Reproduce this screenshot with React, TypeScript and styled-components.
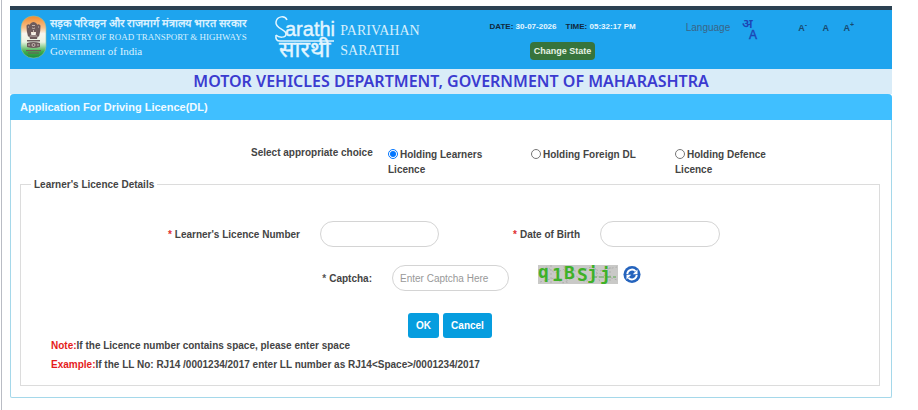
import React, { useState } from "react";
import styled, { createGlobalStyle } from "styled-components";

const GlobalStyle = createGlobalStyle`
  *, *::before, *::after { box-sizing: border-box; }
  body {
    margin: 0;
    background: #fff;
    color: #444;
    font: 700 10px/15px "Liberation Sans", Arial, sans-serif;
  }
  button, input { font: inherit; }
`;

const Page = styled.div`
  min-height: 100vh;
  margin-left: 1px;
  padding: 6px 26px 12px 8px;
  border-left: 1px solid #b9bcc4;
`;

const Header = styled.header`
  display: grid;
  grid-template-columns: 265fr 184fr 206fr 226fr;
  min-height: 63px;
  border-top: 4px solid #2b4152;
  background: #1ea4ee;
`;

const Ministry = styled.div`
  display: flex;
  align-items: flex-start;
  gap: 3px;
  padding: 5px 0 0 10px;
`;

const MinistryText = styled.div`
  padding-top: 1px;
  color: #d9f1ff;
  font: 400 11px/14px "Liberation Serif", "Times New Roman", serif;
  white-space: nowrap;
`;

const Hindi = styled.div`
  font-weight: 600;
`;

const MinistryName = styled.div`
  font-size: 9px;
`;

const Government = styled.div`
  font-size: 11px;
`;

const Brand = styled.div`
  display: flex;
  gap: 4px;
  align-items: flex-start;
  padding-top: 4px;
`;

const BrandName = styled.div`
  padding-top: 7px;
  color: #d5effd;
  font: 400 14px/20px "Liberation Serif", "Times New Roman", serif;
`;

const Clock = styled.div`
  display: flex;
  flex-direction: column;
  align-items: center;
  gap: 8px;
  padding-top: 10px;
`;

const ClockLine = styled.div`
  display: flex;
  gap: 9px;
  color: #e6f6ff;
  font-size: 8px;
  line-height: 14px;
  white-space: nowrap;
`;

const ClockKey = styled.span`
  color: #10293e;
`;

const StateButton = styled.button`
  height: 18px;
  padding: 0 4px;
  border: 0;
  border-radius: 4px;
  background: #37743c;
  color: #e6f2e4;
  font-size: 9px;
  line-height: 18px;
`;

const Tools = styled.div`
  display: flex;
  align-items: flex-start;
  padding: 5px 0 0 20px;
`;

const LanguageLabel = styled.span`
  padding: 5px 12px 0 0;
  color: #3a6586;
  font-weight: 400;
`;

const IconButton = styled.button`
  display: block;
  padding: 0;
  border: 0;
  background: none;
  line-height: 0;
`;

const TextSizes = styled.div`
  display: flex;
  gap: 12px;
  padding: 6px 0 0 35px;
`;

const SizeButton = styled.button`
  width: 11px;
  padding: 0;
  border: 0;
  background: none;
  color: #184a70;
  font-size: 9px;
  line-height: 14px;
  white-space: nowrap;

  sup {
    font-size: 7px;
    line-height: 0;
  }
`;

const Department = styled.h1`
  margin: 0;
  background: #d9ecf8;
  color: #3b3bd0;
  font: 600 16px/25px "Noto Sans", "Open Sans", sans-serif;
  text-align: center;
`;

const Panel = styled.main`
  border: 1px solid #a5d8ea;
  border-top: 0;
  border-radius: 4px 4px 2px 2px;
`;

const PanelTitle = styled.h2`
  margin: 0 -1px;
  padding: 0 10px;
  border-radius: 4px 4px 0 0;
  background: #40bfff;
  color: #f1faff;
  font-size: 11px;
  line-height: 26px;
`;

const PanelBody = styled.form`
  padding: 25px 11px 11px 9px;
`;

const Choices = styled.div`
  display: grid;
  grid-template-columns: 231fr 137fr 143fr 144fr 130fr 75fr;
`;

const ChoiceTitle = styled.span`
  grid-column: 2;
  white-space: nowrap;
`;

const Choice = styled.label`
  padding: 2px 32px 0 0;
`;

const Radio = styled.input`
  width: 10px;
  height: 10px;
  margin: 0 2px 0 0;
  vertical-align: -1px;
`;

const Details = styled.fieldset`
  min-width: 0;
  margin: 0;
  padding: 29px 0 9px;
  border: 1px solid #dcdcdc;
`;

const Legend = styled.legend`
  margin-left: 10px;
  padding: 0 3px;
`;

const Row = styled.div<{ $columns: string; $gap: number }>`
  display: grid;
  grid-template-columns: ${(p) => p.$columns};
  align-items: center;
  margin-bottom: ${(p) => p.$gap}px;
`;

const FieldLabel = styled.label`
  padding-right: 20px;
  text-align: right;
  white-space: nowrap;
`;

const Star = styled.span<{ $muted?: boolean }>`
  margin-right: 3px;
  color: ${(p) => (p.$muted ? "#555" : "#e03030")};
`;

const TextBox = styled.input`
  width: 100%;
  height: 26px;
  padding: 0 7px;
  border: 1px solid #d4d4d4;
  border-radius: 13px;
  background: #fff;
  color: #444;
  font-weight: 400;

  &::placeholder { color: #999; }
`;

const Captcha = styled.div`
  display: flex;
  align-items: center;
  gap: 5px;
  margin-top: -8px;
  padding-left: 29px;
`;

const Actions = styled.div`
  display: flex;
  justify-content: center;
  gap: 4px;
`;

const ActionButton = styled.button`
  height: 25px;
  padding: 0 8px;
  border: 0;
  border-radius: 3px;
  background: #069ddf;
  color: #fff;
`;

const Note = styled.p`
  margin: 0 0 4px 30px;
`;

const NoteKey = styled.span`
  color: #e51c1c;
`;

function Emblem() {
  return (
    <svg width="27" height="44" viewBox="0 0 27 44" role="img" aria-label="National emblem">
      <defs>
        <linearGradient id="tricolour" x1="0" y1="0" x2="0" y2="1">
          <stop offset="0" stopColor="#f2892b" />
          <stop offset="0.28" stopColor="#f6c08b" />
          <stop offset="0.42" stopColor="#f7f5ee" />
          <stop offset="0.62" stopColor="#e9f3e2" />
          <stop offset="0.85" stopColor="#3fae4c" />
          <stop offset="1" stopColor="#1c8a3c" />
        </linearGradient>
      </defs>
      <rect x="1" y="1" width="25" height="42" rx="12" fill="url(#tricolour)" stroke="#8fc3a2" strokeWidth="0.6" />
      <g fill="#6d5b5c">
        <path d="M10 9q3.500-4 7 0l.5 3-1 5h-6l-1-5z" />
        <path d="M6.500 10.500q2-2 3.500-.5l.500 3.500 1 8H8L6.800 16z" />
        <path d="M20.500 10.500q-2-2-3.500-.5l-.5 3.500-1 8H19l1.200-5.500z" />
        <path d="M9 20h9l-1 4h-7z" />
        <path d="M7 25h13v1.500H7z" />
        <path d="M7 28q6.500-2 13 0v4q-6.500 2-13 0z" />
        <path d="M6 35h15v1.200H6zM8 37.500h11v1H8z" />
      </g>
      <g fill="none" stroke="#e6ddd3" strokeWidth="0.7">
        <circle cx="13.500" cy="30" r="1.500" />
        <path d="M9 29v2M18 29v2M12 10.500h3M12 13q1.500 1 3 0M8 12h1M18 12h1M10 21h7M13.500 15v4" />
      </g>
    </svg>
  );
}

function SarathiLogo() {
  return (
    <svg width="61" height="48" viewBox="0 0 61 48" overflow="visible" role="img" aria-label="Sarathi">
      <g fill="#e2f5ff" stroke="#e2f5ff" strokeWidth="0.4" fontWeight="400">
        <text x="10" y="22" fontSize="20" fontFamily="Liberation Sans, sans-serif">arathi</text>
        <text x="4" y="43" fontSize="23" fontFamily="Noto Sans, Noto Sans Devanagari, sans-serif">सारथी</text>
      </g>
      <path
        d="M12 6C10 1 2 2 1 8c-1 7 10 7 10 12 0 4-7 4-10 1M1 21q-1 6 4 6h54"
        fill="none"
        stroke="#e2f5ff"
        strokeWidth="1.500"
      />
    </svg>
  );
}

function LanguageIcon() {
  return (
    <svg width="20" height="28" viewBox="0 0 20 28" overflow="visible" fill="#1d45b4">
      <text x="0" y="13" fontSize="13" fontWeight="600" fontFamily="Noto Sans, Noto Sans Devanagari, sans-serif">अ</text>
      <text x="7" y="24" fontSize="12" fontWeight="400" stroke="#1d45b4" strokeWidth="0.4" fontFamily="Liberation Sans, sans-serif">A</text>
    </svg>
  );
}

function CaptchaPicture() {
  const letters: [string, number, number][] = [
    ["q", 0, 13], ["1", 14, 16], ["B", 26, 14], ["S", 39, 16], ["j", 49, 14], ["j", 62, 15],
  ];
  return (
    <svg width="80" height="19" viewBox="0 0 80 19" role="img" aria-label="Captcha text">
      <rect width="80" height="19" fill="#c9c9c7" />
      <path
        d="M0 5l9-3 8 6 12-5 11 4 13-5 8 4 18-4M2 17l14-4 9 5 13-7 9 6 13-9 19 7M13 0v19M26 1l3 17M57 3l5 14M72 2v15"
        fill="none"
        stroke="#a3a3a3"
        strokeDasharray="2 2"
        strokeWidth="0.700"
      />
      <path d="M54 12h24" stroke="#58a94d" strokeDasharray="5 2" fill="none" />
      <g fill="#3eb128" fontFamily="DejaVu Sans Mono, monospace" fontWeight="700" fontSize="18">
        {letters.map(([ch, x, y]) => (
          <text key={x} x={x} y={y}>{ch}</text>
        ))}
      </g>
    </svg>
  );
}

function RefreshIcon() {
  return (
    <svg width="18" height="19" viewBox="0 0 19 19">
      <circle cx="9.500" cy="9.500" r="9" fill="#2463bd" />
      <path d="M4.500 9a5 5 0 0 1 8.700-3M14.500 10a5 5 0 0 1-8.700 3" fill="none" stroke="#fff" strokeWidth="2" />
      <path d="M15.300 4.200v5h-5zM3.700 14.800v-5h5z" fill="#fff" />
    </svg>
  );
}

const choices = ["Holding Learners Licence", "Holding Foreign DL", "Holding Defence Licence"];

export default function App() {
  const [choice, setChoice] = useState(choices[0]);

  return (
    <>
      <GlobalStyle />
      <Page>
        <Header>
          <Ministry>
            <Emblem />
            <MinistryText>
              <Hindi lang="hi">सड़क परिवहन और राजमार्ग मंत्रालय भारत सरकार</Hindi>
              <MinistryName>MINISTRY OF ROAD TRANSPORT &amp; HIGHWAYS</MinistryName>
              <Government>Government of India</Government>
            </MinistryText>
          </Ministry>
          <Brand>
            <SarathiLogo />
            <BrandName>PARIVAHAN<br />SARATHI</BrandName>
          </Brand>
          <Clock>
            <ClockLine>
              <span><ClockKey>DATE:</ClockKey> 30-07-2026</span>
              <span><ClockKey>TIME:</ClockKey> 05:32:17 PM</span>
            </ClockLine>
            <StateButton type="button">Change State</StateButton>
          </Clock>
          <Tools>
            <LanguageLabel>Language</LanguageLabel>
            <IconButton type="button" aria-label="Change language"><LanguageIcon /></IconButton>
            <TextSizes>
              <SizeButton type="button">A<sup>-</sup></SizeButton>
              <SizeButton type="button">A</SizeButton>
              <SizeButton type="button">A<sup>+</sup></SizeButton>
            </TextSizes>
          </Tools>
        </Header>
        <Department>MOTOR VEHICLES DEPARTMENT, GOVERNMENT OF MAHARASHTRA</Department>
        <Panel>
          <PanelTitle>Application For Driving Licence(DL)</PanelTitle>
          <PanelBody onSubmit={(e) => e.preventDefault()}>
            <Choices role="radiogroup" aria-labelledby="choice-title">
              <ChoiceTitle id="choice-title">Select appropriate choice</ChoiceTitle>
              {choices.map((name) => (
                <Choice key={name}>
                  <Radio type="radio" name="choice" checked={choice === name} onChange={() => setChoice(name)} />
                  {name}
                </Choice>
              ))}
            </Choices>
            <Details>
              <Legend>Learner's Licence Details</Legend>
              <Row $columns="299fr 119fr 161fr 120fr 159fr" $gap={18}>
                <FieldLabel htmlFor="licence"><Star>*</Star>Learner's Licence Number</FieldLabel>
                <TextBox id="licence" type="text" />
                <FieldLabel htmlFor="birth"><Star>*</Star>Date of Birth</FieldLabel>
                <TextBox id="birth" type="text" />
              </Row>
              <Row $columns="371fr 117fr 370fr" $gap={22}>
                <FieldLabel htmlFor="captcha"><Star $muted>*</Star>Captcha:</FieldLabel>
                <TextBox id="captcha" type="text" placeholder="Enter Captcha Here" />
                <Captcha>
                  <CaptchaPicture />
                  <IconButton type="button" aria-label="Refresh captcha"><RefreshIcon /></IconButton>
                </Captcha>
              </Row>
              <Actions>
                <ActionButton type="submit">OK</ActionButton>
                <ActionButton type="reset">Cancel</ActionButton>
              </Actions>
              <Note><NoteKey>Note:</NoteKey>If the Licence number contains space, please enter space</Note>
              <Note>
                <NoteKey>Example:</NoteKey>If the LL No: RJ14 /0001234/2017 enter LL number as RJ14&lt;Space&gt;/0001234/2017
              </Note>
            </Details>
          </PanelBody>
        </Panel>
      </Page>
    </>
  );
}
